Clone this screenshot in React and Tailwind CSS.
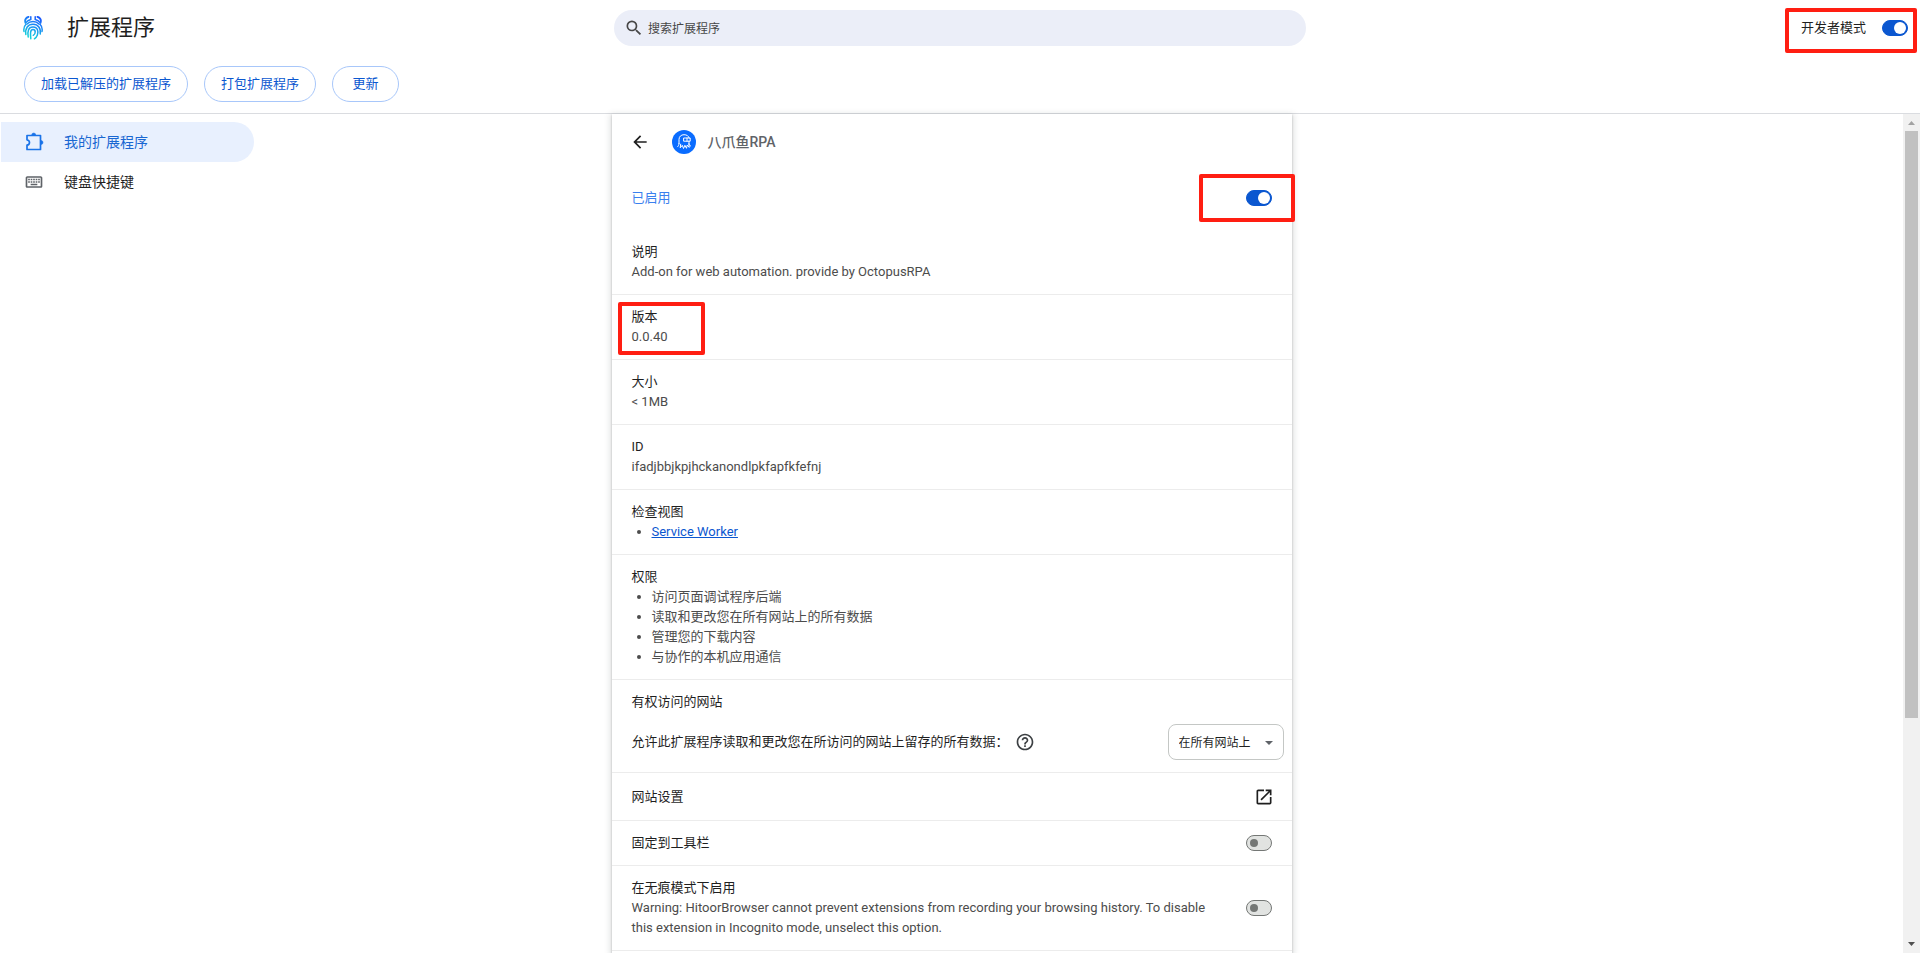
import { useState } from 'react';

const permissions = [
  '访问页面调试程序后端',
  '读取和更改您在所有网站上的所有数据',
  '管理您的下载内容',
  '与协作的本机应用通信',
];

function Toggle({ id, label, on = false }) {
  const [checked, setChecked] = useState(on);
  return (
    <input
      id={id}
      type="checkbox"
      role="switch"
      aria-label={label}
      checked={checked}
      onChange={(e) => setChecked(e.target.checked)}
      className="flex h-4 w-[26px] shrink-0 cursor-pointer appearance-none items-center rounded-full border border-[#747775] bg-[#e1e3e1] px-[3px] before:block before:size-2 before:rounded-full before:bg-[#747775] checked:justify-end checked:border-[#0b57d0] checked:bg-[#0b57d0] checked:px-px checked:before:size-3 checked:before:bg-white"
    />
  );
}

function Outline({ className }) {
  return <span aria-hidden="true" className={`pointer-events-none absolute rounded-xs border-4 border-[#ff1e12] ${className}`} />;
}

function Row({ title, children }) {
  return (
    <section className="border-t border-[#ececec] px-5 py-3">
      <h2>{title}</h2>
      <div className="text-[#4c4c4c]">{children}</div>
    </section>
  );
}

function BrandLogo() {
  return (
    <svg viewBox="0 0 20 24" className="h-6 w-5" fill="none" strokeWidth="1.500" strokeLinecap="round" aria-hidden="true">
      <defs>
        <linearGradient id="brand" x1="16" y1="0" x2="4" y2="24" gradientUnits="userSpaceOnUse">
          <stop offset="0" stopColor="#1a50ff" />
          <stop offset="0.500" stopColor="#1a9bf0" />
          <stop offset="1" stopColor="#10e5cf" />
        </linearGradient>
      </defs>
      <g stroke="url(#brand)">
        <path d="M5.500.8C2.800 1.800 1.600 4.300 2.500 7M14.500.8c2.700 1 3.900 3.500 3 6.200" strokeWidth="1.800" />
        <path d="M7.800.8v2.600c-2 .5-3.600 1.500-4.600 3M12.200.8v2.600c2 .5 3.600 1.500 4.600 3" />
        <path d="M4 8c3.200-3.300 8.800-3.300 12 0M1 15.500c-.5-3 .2-5.500 1.800-7M19 15.500c.5-3-.2-5.500-1.800-7" />
        <path d="M2.800 18.500C2 12 5 8.300 10 8.300s8.200 4 7.200 9.700" />
        <path d="M5.200 21c-.9-6 .2-10.100 4.800-10.100s5.700 4.300 4.400 8.100c-.6 1.700-1.700 2.900-3 3.800" />
        <path d="M7.800 22.800c-.5-5.500-.7-9.300 2.200-9.300 3 0 2.800 4.400.3 5.800" />
      </g>
    </svg>
  );
}

function OctopusIcon() {
  return (
    <svg viewBox="0 0 24 24" className="size-6" fill="none" aria-hidden="true">
      <circle cx="12" cy="12" r="12" fill="#0a6cff" />
      <g stroke="#fff" strokeWidth="1" strokeLinecap="round" strokeLinejoin="round">
        <path d="M7 13.500V9.600C7 6.600 9 4.700 12 4.700c2.800 0 4.700 1.300 5.200 3.300" />
        <path d="M12 8h6.200v3.200H12zM15 8v3.200M17 11.200v2.600" />
        <path d="M7 13.500c0 1.500-.7 2.500-1.500 3.300M8.700 14.200l-.5 3.600 2.100-2.500 1.200 3.200 1.400-3.200 1.600 3 .7-3.200 2 2.300-.3-3.200M17 13.800c.3 1.200 1 1.800 1.700 2.400" />
      </g>
    </svg>
  );
}

export default function App() {
  const pill =
    'h-9 min-w-[67px] cursor-pointer rounded-full border border-[#a8c7fa] px-4 text-[13px] text-[#0b57d0] hover:bg-[#f2f6fd]';
  return (
    <div className="flex h-screen flex-col overflow-hidden bg-white font-[Roboto,'Noto_Sans_CJK_SC',sans-serif] text-[13px] leading-5 text-[#1f1f1f]">
      <header className="shrink-0 border-b border-[#dadce0]">
        <div className="grid grid-cols-[1fr_minmax(0,692px)_1fr] py-2">
          <div className="flex items-center gap-6 pl-[23px]">
            <BrandLogo />
            <h1 className="text-[22px] leading-10">扩展程序</h1>
          </div>
          <label className="mt-0.5 flex h-9 items-center gap-1 rounded-full bg-[#ebeef8] px-2.5 text-[#474747]">
            <svg viewBox="0 0 24 24" className="size-5 shrink-0" fill="currentColor" aria-hidden="true">
              <path d="M15.500 14h-.79l-.28-.27A6.471 6.471 0 0 0 16 9.500 6.500 6.500 0 1 0 9.500 16c1.610 0 3.090-.59 4.230-1.570l.27.28v.79l5 4.990L20.490 19l-4.990-5zm-6 0C7.010 14 5 11.990 5 9.500S7.010 5 9.500 5 14 7.010 14 9.500 11.990 14 9.500 14z" />
            </svg>
            <input
              type="search"
              aria-label="搜索扩展程序"
              placeholder="搜索扩展程序"
              className="min-w-0 flex-1 bg-transparent pt-0.5 text-xs outline-none placeholder:text-[#474747]"
            />
          </label>
          <div className="flex items-center justify-end pr-[3px]">
            <div className="relative flex items-center gap-4 pr-[9px]">
              <label htmlFor="dev-mode">开发者模式</label>
              <Toggle id="dev-mode" label="开发者模式" on />
              <Outline className="-top-[10px] right-0 h-[45px] w-[132px]" />
            </div>
          </div>
        </div>
        <div className="flex gap-4 px-6 pt-2.5 pb-[11px]">
          <button type="button" className={pill}>加载已解压的扩展程序</button>
          <button type="button" className={pill}>打包扩展程序</button>
          <button type="button" className={pill}>更新</button>
        </div>
      </header>

      <div className="flex min-h-0 flex-1">
        <div className="grid min-w-0 flex-1 grid-cols-[1fr_minmax(0,680px)_1fr]">
          <nav className="pt-2 pl-px text-sm">
            <a href="#extensions" className="flex h-10 w-[253px] items-center gap-5 rounded-r-full bg-[#e8f0fe] pl-[23px] text-[#1967d2]">
              <svg viewBox="0 0 20 20" className="size-5" aria-hidden="true">
                <path d="M3 3.500h13.500v14H3v-4.300c3.300-.5 3.300-4.900 0-5.400z" fill="none" stroke="#1a73e8" strokeWidth="1.700" strokeLinejoin="round" />
                <path d="M7.700 3a2 2 0 0 1 4 0zM17 8.500a2 2 0 0 1 0 4z" fill="#1a73e8" stroke="#1a73e8" strokeWidth="0.500" />
              </svg>
              我的扩展程序
            </a>
            <a href="#shortcuts" className="flex h-10 w-[253px] items-center gap-5 pl-[23px]">
              <svg viewBox="0 0 24 24" className="size-5" fill="#5f6368" aria-hidden="true">
                <path d="M20 7v10H4V7h16m0-2H4c-1.100 0-1.990.9-1.990 2L2 17c0 1.100.9 2 2 2h16c1.100 0 2-.9 2-2V7c0-1.100-.9-2-2-2zm-9 3h2v2h-2zm0 3h2v2h-2zM8 8h2v2H8zm0 3h2v2H8zm-3 0h2v2H5zm0-3h2v2H5zm3 6h8v2H8zm6-3h2v2h-2zm0-3h2v2h-2zm3 3h2v2h-2zm0-3h2v2h-2z" />
              </svg>
              键盘快捷键
            </a>
          </nav>

          <div className="min-h-0">
            <main className="min-h-full bg-white shadow-[0_1px_2px_rgba(60,64,67,0.3),0_2px_6px_2px_rgba(60,64,67,0.15)]">
              <div className="flex h-14 items-center pl-[18px]">
                <button type="button" aria-label="返回" className="cursor-pointer">
                  <svg viewBox="0 0 24 24" className="size-5" fill="#1f1f1f" aria-hidden="true">
                    <path d="M20 11H7.830l5.590-5.590L12 4l-8 8 8 8 1.410-1.410L7.830 13H20v-2z" />
                  </svg>
                </button>
                <div className="flex items-center gap-3 pl-[22px] text-sm font-medium text-[#5f6368]">
                  <OctopusIcon />
                  <span>八爪鱼RPA</span>
                </div>
              </div>

              <div className="relative flex h-14 items-center justify-between px-5">
                <label htmlFor="enabled" className="text-[#3a80ee]">已启用</label>
                <Toggle id="enabled" label="已启用" on />
                <Outline className="top-1 -right-[3px] h-12 w-24" />
              </div>

              <section className="px-5 pt-4 pb-3">
                <h2>说明</h2>
                <p className="text-[#4c4c4c]">Add-on for web automation. provide by OctopusRPA</p>
              </section>
              <div className="relative">
                <Row title="版本">0.0.40</Row>
                <Outline className="top-2 left-1.5 h-[53px] w-[87px]" />
              </div>
              <Row title="大小">&lt; 1MB</Row>
              <Row title="ID">ifadjbbjkpjhckanondlpkfapfkfefnj</Row>
              <Row title="检查视图">
                <ul className="list-disc pl-5">
                  <li><a href="#service-worker" className="text-[#0b57d0] underline">Service Worker</a></li>
                </ul>
              </Row>
              <Row title="权限">
                <ul className="list-disc pl-5">
                  {permissions.map((p) => <li key={p}>{p}</li>)}
                </ul>
              </Row>

              <section className="border-t border-[#ececec] py-3 pr-2 pl-5">
                <h2>有权访问的网站</h2>
                <div className="mt-3 flex h-9 items-center">
                  <label htmlFor="site-access">允许此扩展程序读取和更改您在所访问的网站上留存的所有数据：</label>
                  <button type="button" aria-label="了解详情" className="ml-1.5 cursor-pointer">
                    <svg viewBox="0 0 24 24" className="size-5" fill="#3c4043" aria-hidden="true">
                      <path d="M11 18h2v-2h-2v2zm1-16C6.480 2 2 6.480 2 12s4.480 10 10 10 10-4.480 10-10S17.520 2 12 2zm0 18c-4.410 0-8-3.590-8-8s3.590-8 8-8 8 3.590 8 8-3.590 8-8 8zm0-14c-2.210 0-4 1.790-4 4h2c0-1.100.9-2 2-2s2 .9 2 2c0 2-3 1.750-3 5h2c0-2.250 3-2.500 3-5 0-2.210-1.790-4-4-4z" />
                    </svg>
                  </button>
                  <div className="relative ml-auto">
                    <select id="site-access" className="h-9 w-[116px] appearance-none rounded-lg border border-[#c4c7c5] bg-white pt-0.5 pl-2.5 text-xs">
                      <option>在所有网站上</option>
                      <option>点击时</option>
                      <option>在特定网站上</option>
                    </select>
                    <svg viewBox="0 0 8 4" className="pointer-events-none absolute top-[17px] right-[11px] h-1 w-2" fill="#5f6368" aria-hidden="true">
                      <path d="M0 0h8L4 4z" />
                    </svg>
                  </div>
                </div>
              </section>

              <a href="#site-settings" className="flex h-12 items-center justify-between border-t border-[#ececec] pr-[18px] pl-5">
                网站设置
                <svg viewBox="0 0 24 24" className="size-5" fill="#1f1f1f" aria-hidden="true">
                  <path d="M19 19H5V5h7V3H5c-1.110 0-2 .9-2 2v14c0 1.100.89 2 2 2h14c1.100 0 2-.9 2-2v-7h-2v7zM14 3v2h3.590l-9.830 9.830 1.410 1.410L19 6.410V10h2V3h-7z" />
                </svg>
              </a>
              <div className="flex h-[45px] items-center justify-between border-t border-[#ececec] px-5">
                <label htmlFor="pin">固定到工具栏</label>
                <Toggle id="pin" label="固定到工具栏" />
              </div>
              <div className="flex items-center justify-between gap-8 border-t border-[#ececec] px-5 py-3">
                <div>
                  <label htmlFor="incognito">在无痕模式下启用</label>
                  <p className="text-[#4c4c4c]">
                    Warning: HitoorBrowser cannot prevent extensions from recording your browsing history. To disable this extension in Incognito mode, unselect this option.
                  </p>
                </div>
                <Toggle id="incognito" label="在无痕模式下启用" />
              </div>
              <div className="border-t border-[#ececec]" />
            </main>
          </div>
        </div>

        <div aria-hidden="true" className="flex w-[17px] shrink-0 flex-col items-center bg-[#f1f1f1]">
          <svg viewBox="0 0 17 17" className="size-[17px] shrink-0" fill="#a3a3a3"><path d="M5 11h7L8.500 7z" /></svg>
          <div className="w-[13px] flex-[587] bg-[#c1c1c1]" />
          <div className="flex-[218]" />
          <svg viewBox="0 0 17 17" className="size-[17px] shrink-0" fill="#505050"><path d="M5 6h7l-3.500 4z" /></svg>
        </div>
      </div>
    </div>
  );
}
